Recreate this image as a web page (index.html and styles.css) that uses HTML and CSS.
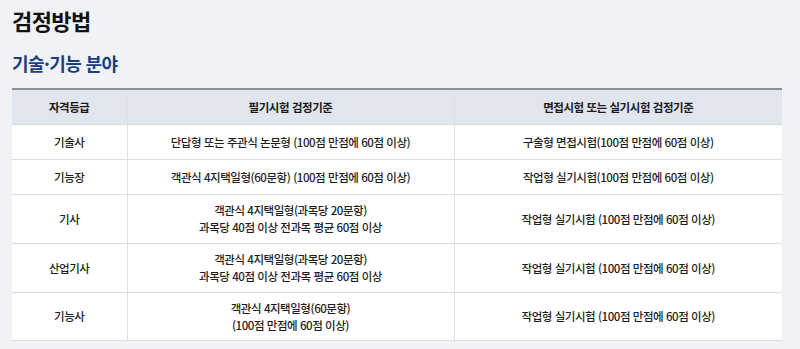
FILE: index.html
```html
<!DOCTYPE html>
<html lang="ko">
<head>
<meta charset="utf-8">
<link rel="stylesheet" href="styles.css">
</head>
<body>
<div class="page">
  <h1 class="title">검정방법</h1>
  <h2 class="subtitle">기술·기능 분야</h2>
  <table class="grid">
    <colgroup>
      <col class="c1"><col class="c2"><col class="c3">
    </colgroup>
    <thead>
      <tr><th>자격등급</th><th>필기시험 검정기준</th><th>면접시험 또는 실기시험 검정기준</th></tr>
    </thead>
    <tbody>
      <tr class="one"><td>기술사</td><td>단답형 또는 주관식 논문형 (100점 만점에 60점 이상)</td><td>구술형 면접시험(100점 만점에 60점 이상)</td></tr>
      <tr class="one"><td>기능장</td><td>객관식 4지택일형(60문항) (100점 만점에 60점 이상)</td><td>작업형 실기시험(100점 만점에 60점 이상)</td></tr>
      <tr class="two"><td>기사</td><td>객관식 4지택일형(과목당 20문항)<br>과목당 40점 이상 전과목 평균 60점 이상</td><td>작업형 실기시험 (100점 만점에 60점 이상)</td></tr>
      <tr class="two"><td>산업기사</td><td>객관식 4지택일형(과목당 20문항)<br>과목당 40점 이상 전과목 평균 60점 이상</td><td>작업형 실기시험 (100점 만점에 60점 이상)</td></tr>
      <tr class="two"><td>기능사</td><td>객관식 4지택일형(60문항)<br>(100점 만점에 60점 이상)</td><td>작업형 실기시험 (100점 만점에 60점 이상)</td></tr>
    </tbody>
  </table>
</div>
</body>
</html>
```
FILE: styles.css
```css
html, body {
  margin: 0;
  padding: 0;
  background: #f1f2f6;
}
body {
  font-family: "Noto Sans CJK KR", "Noto Sans", sans-serif;
  color: #222;
}
.page {
  padding: 4px 18px 0 12px;
}
.title {
  margin: 0;
  font-size: 22px;
  line-height: 32px;
  font-weight: 700;
  letter-spacing: -0.6px;
  color: #111;
}
.subtitle {
  margin: 15px 0 0;
  font-size: 18px;
  line-height: 24px;
  font-weight: 700;
  letter-spacing: -0.6px;
  color: #173f7f;
}
.grid {
  margin-top: 13px;
  width: 770px;
  border-collapse: collapse;
  table-layout: fixed;
  border-top: 2px solid #8c8f96;
  border-bottom: 1px solid #dadce0;
  background: #fff;
}
.c1 { width: 115px; }
.c2 { width: 327px; }
.c3 { width: 328px; }
.grid th, .grid td {
  text-align: center;
  vertical-align: middle;
  font-size: 11.5px;
  line-height: 17px;
  letter-spacing: -0.45px;
  padding: 0 6px;
  border-left: 1px solid #dfe0e4;
}
.grid th:first-child, .grid td:first-child { border-left: none; }
.grid th {
  background: #e1e5ee;
  font-weight: 700;
  color: #1a1a1a;
  height: 34px;
  border-bottom: 1px solid #d6d8dd;
}
.grid td {
  border-bottom: 1px solid #dcdde0;
  color: #1e1e1e;
  font-weight: 500;
}
.grid tr.one td { height: 34px; }
.grid tr.two td { height: 48px; }
.grid tbody tr:last-child td { height: 47px; border-bottom: none; }
```
